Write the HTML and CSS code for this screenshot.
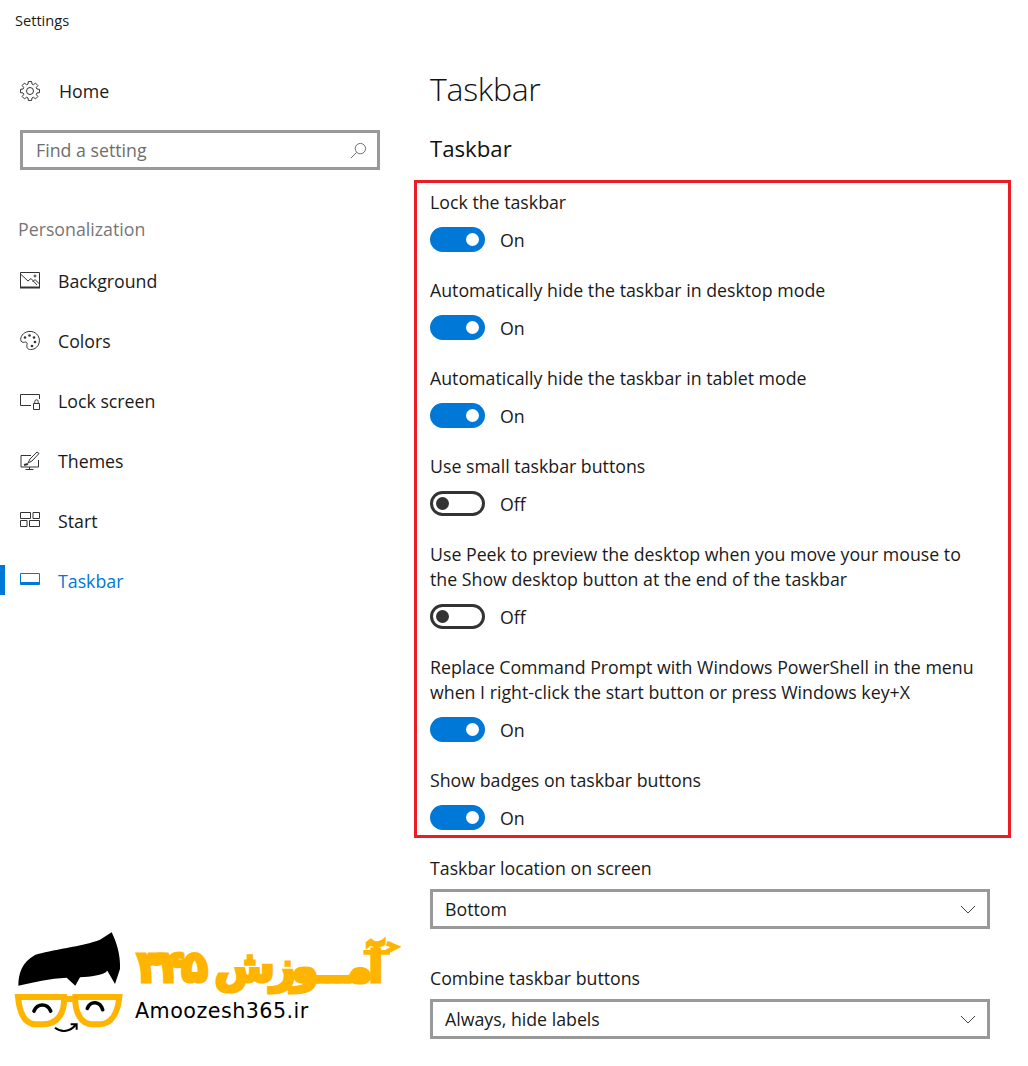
FILE: index.html
```html
<!DOCTYPE html>
<html lang="en">
<head>
    <meta charset="UTF-8">
    <title>Settings</title>
    <link rel="stylesheet" href="styles.css">
</head>
<body>
    <div class="titlebar">Settings</div>

    <div class="app">
        <div class="sidebar">
            <div class="home">
                <svg class="icon" viewBox="0 0 20 20"><path d="M16.92 8.02L19.45 8.33V11.67L16.92 11.98L16.3 13.49L17.86 15.51L15.51 17.86L13.49 16.3L11.98 16.92L11.67 19.45H8.33L8.02 16.92L6.51 16.3L4.49 17.86L2.14 15.51L3.7 13.49L3.08 11.98L.55 11.67V8.33L3.08 8.02L3.7 6.51L2.14 4.49L4.49 2.14L6.51 3.7L8.02 3.08L8.33 .55H11.67L11.98 3.08L13.49 3.7L15.51 2.14L17.86 4.49L16.3 6.51Z"/><circle cx="10" cy="10" r="3.5"/></svg>
                <span>Home</span>
            </div>

            <div class="search">
                <span>Find a setting</span>
                <svg class="search-icon" viewBox="0 0 18 18"><circle cx="11" cy="7" r="5.5"/><path d="M7 11L1 17"/></svg>
            </div>

            <div class="section-label">Personalization</div>

            <ul class="nav">
                <li>
                    <svg class="icon" viewBox="0 0 20 20"><path d="M.5 2.5H19.5V17.5H.5Z"/><path d="M.5 4L8 11L11 8.5L17 15"/><path d="M12.5 12L15 9.5L19.5 14"/><circle cx="15" cy="6" r="1"/><path class="heavy" d="M0 17.5H20"/></svg>
                    <span>Background</span>
                </li>
                <li>
                    <svg class="icon" viewBox="0 0 20 20"><path d="M10 1.4C4.8 1.4 .7 5.1 .7 9.5C.7 12.1 2.8 12.7 4.5 12.2C6.4 11.7 7.6 12.7 7 14.5C6.4 16.5 7 19.6 10.5 19.6C15.6 19.6 19.4 15.5 19.4 10.5C19.4 5.4 15.2 1.4 10 1.4Z"/><circle class="dot" cx="5" cy="7.5" r="1.3"/><circle class="dot" cx="9.5" cy="5.5" r="1.3"/><circle class="dot" cx="14" cy="7.5" r="1.3"/><circle class="dot" cx="15" cy="12" r="1.3"/><circle class="dot" cx="12" cy="16" r="1.3"/></svg>
                    <span>Colors</span>
                </li>
                <li>
                    <svg class="icon" viewBox="0 0 20 20"><path d="M11 15.5H.5V4.5H19.5V9"/><path d="M13.5 13.5H19.5V19.5H13.5Z"/><path d="M14.8 13.5V11.5A1.7 1.7 0 0 1 18.2 11.5V13.5"/></svg>
                    <span>Lock screen</span>
                </li>
                <li>
                    <svg class="icon" viewBox="0 0 20 20"><path d="M11 5.5H1V17H18.5V10"/><path d="M9.5 17V19.5M5.5 19.5H13.5"/><path d="M8 13L10 9L17 2L19 3.5L12 11Z"/><path class="heavy" d="M4 15L8 14"/></svg>
                    <span>Themes</span>
                </li>
                <li>
                    <svg class="icon" viewBox="0 0 20 20"><path d="M.5 2.5H10.5V8.5H.5Z"/><path d="M13 2.5H19.5V8.5H13Z"/><path d="M.5 10.5H7V16.5H.5Z"/><path d="M9.5 10.5H19.5V16.5H9.5Z"/></svg>
                    <span>Start</span>
                </li>
                <li class="active">
                    <svg class="icon" viewBox="0 0 20 20"><path d="M.5 3.5H19.5V14.5H.5Z"/><path class="heavy" d="M0 13H20"/></svg>
                    <span>Taskbar</span>
                </li>
            </ul>

            <svg class="logo" viewBox="0 0 1230 390">
                <path class="logo-hair" d="M55 200C55 165 65 130 105 108C150 92 250 82 300 62L335 40C350 70 362 110 360 150L345 195L322 155C310 170 270 172 240 175L226 200L200 176C150 178 100 190 55 200Z"/>
                <path class="logo-frame" d="M54 234H192C194 275 178 316 128 316H108C72 316 58 275 54 234Z"/>
                <path class="logo-frame" d="M226 234H358C354 275 338 316 298 316H278C240 316 224 275 226 234Z"/>
                <path class="logo-frame" d="M192 240H226"/>
                <path class="logo-face" d="M102 276C112 252 142 252 152 276"/>
                <path class="logo-face" d="M262 268C272 244 300 246 308 272"/>
                <path class="logo-smile" d="M165 326C185 342 212 338 228 316M212 316H230V332"/>
                <text class="logo-fa" x="1150" y="190" direction="rtl" text-anchor="start" textLength="740">آمـــوزش ۳۴۵</text>
                <path class="logo-arrow" d="M1090 100H1170M1160 72L1188 84L1160 98"/>
                <text class="logo-en" x="405" y="298" textLength="520">Amoozesh365.ir</text>
            </svg>
        </div>

        <div class="content">
            <h1>Taskbar</h1>
            <h2>Taskbar</h2>

            <div class="highlight">
                <div class="setting">
                    <p>Lock the taskbar</p>
                    <div class="switch-row"><span class="switch on"></span><span>On</span></div>
                </div>
                <div class="setting">
                    <p>Automatically hide the taskbar in desktop mode</p>
                    <div class="switch-row"><span class="switch on"></span><span>On</span></div>
                </div>
                <div class="setting">
                    <p>Automatically hide the taskbar in tablet mode</p>
                    <div class="switch-row"><span class="switch on"></span><span>On</span></div>
                </div>
                <div class="setting">
                    <p>Use small taskbar buttons</p>
                    <div class="switch-row"><span class="switch"></span><span>Off</span></div>
                </div>
                <div class="setting">
                    <p>Use Peek to preview the desktop when you move your mouse to<br>the Show desktop button at the end of the taskbar</p>
                    <div class="switch-row"><span class="switch"></span><span>Off</span></div>
                </div>
                <div class="setting">
                    <p>Replace Command Prompt with Windows PowerShell in the menu<br>when I right-click the start button or press Windows key+X</p>
                    <div class="switch-row"><span class="switch on"></span><span>On</span></div>
                </div>
                <div class="setting">
                    <p>Show badges on taskbar buttons</p>
                    <div class="switch-row"><span class="switch on"></span><span>On</span></div>
                </div>
            </div>

            <div class="field">
                <p>Taskbar location on screen</p>
                <div class="select">
                    <span>Bottom</span>
                    <svg class="chevron" viewBox="0 0 16 9"><path d="M1 1L8 8L15 1"/></svg>
                </div>
            </div>
            <div class="field">
                <p>Combine taskbar buttons</p>
                <div class="select">
                    <span>Always, hide labels</span>
                    <svg class="chevron" viewBox="0 0 16 9"><path d="M1 1L8 8L15 1"/></svg>
                </div>
            </div>
        </div>
    </div>
</body>
</html>
```

FILE: styles.css
```css
* {
    margin: 0;
    padding: 0;
    box-sizing: border-box;
}

body {
    font-family: "Open Sans", sans-serif;
    font-size: 17.75px;
    line-height: 25px;
    color: #1a1a1a;
    background: #fff;
}

.titlebar {
    height: 42px;
    padding-left: 15px;
    font-size: 14.6px;
    line-height: 40px;
}

.app {
    display: flex;
}

.sidebar {
    width: 414px;
    flex-shrink: 0;
}

.icon {
    width: 20px;
    height: 20px;
    flex-shrink: 0;
    fill: none;
    stroke: #333;
    stroke-width: 1;
}

.icon .heavy {
    stroke-width: 2;
}

.icon .dot {
    fill: #333;
    stroke: none;
}

.home {
    display: flex;
    align-items: center;
    gap: 19px;
    height: 40px;
    margin-top: 29px;
    padding-left: 20px;
}

.search {
    display: flex;
    justify-content: space-between;
    align-items: center;
    width: 360px;
    height: 40px;
    margin: 19px 0 0 20px;
    padding: 0 10px 0 13px;
    border: 3px solid #999;
    color: #6e6e6e;
}

.search-icon {
    width: 17px;
    height: 17px;
    fill: none;
    stroke: #666;
    stroke-width: 1;
}

.section-label {
    margin-top: 47px;
    padding-left: 18px;
    color: #767676;
}

.nav {
    list-style: none;
    margin-top: 8px;
}

.nav li {
    display: flex;
    align-items: center;
    gap: 18px;
    height: 60px;
    padding-left: 20px;
}

.nav li span {
    padding-top: 2px;
}

.nav li.active {
    color: #0078d7;
    position: relative;
}

.nav li.active::before {
    content: '';
    position: absolute;
    left: 0;
    top: 15px;
    width: 5px;
    height: 30px;
    background: #0078d7;
}

.nav li.active .icon {
    stroke: #0078d7;
}

.logo {
    display: block;
    width: 410px;
    height: 130px;
    margin-top: 309px;
}

.logo-hair {
    fill: #000;
}

.logo-frame {
    fill: #fff;
    stroke: #ffb400;
    stroke-width: 18;
}

.logo-face {
    fill: none;
    stroke: #000;
    stroke-width: 11;
    stroke-linecap: round;
}

.logo-smile {
    fill: none;
    stroke: #000;
    stroke-width: 6;
}

.logo-fa {
    font-family: "DejaVu Sans", sans-serif;
    font-size: 132px;
    font-weight: bold;
    fill: #ffb400;
    stroke: #ffb400;
    stroke-width: 9;
}

.logo-arrow {
    fill: none;
    stroke: #ffb400;
    stroke-width: 14;
}

.logo-en {
    font-family: "DejaVu Sans", sans-serif;
    font-size: 62px;
    fill: #000;
}

.content {
    flex: 1;
    padding-right: 17px;
}

h1 {
    height: 46px;
    margin-top: 25px;
    padding-left: 16px;
    font-size: 32px;
    font-weight: 300;
    letter-spacing: -0.3px;
    line-height: 44px;
    color: #111;
}

h2 {
    height: 32px;
    margin-top: 20px;
    padding-left: 16px;
    font-size: 22.2px;
    font-weight: 400;
    line-height: 32px;
    color: #111;
}

.highlight {
    display: flex;
    flex-direction: column;
    gap: 26px;
    margin-top: 15px;
    padding: 7px 13px 5px;
    border: 3px solid #ed1c24;
}

.switch-row {
    display: flex;
    align-items: center;
    gap: 15px;
    height: 25px;
    margin-top: 12px;
}

.switch-row span:last-child {
    padding-top: 2px;
}

.switch {
    position: relative;
    width: 55px;
    height: 25px;
    border: 3px solid #333;
    border-radius: 13px;
}

.switch::after {
    content: '';
    position: absolute;
    left: 3px;
    top: 3px;
    width: 13px;
    height: 13px;
    border-radius: 50%;
    background: #333;
}

.switch.on {
    background: #0078d7;
    border-color: #0078d7;
}

.switch.on::after {
    left: 33px;
    background: #fff;
}

.field {
    margin-top: 18px;
    padding-left: 16px;
}

.field + .field {
    margin-top: 37px;
}

.select {
    display: flex;
    justify-content: space-between;
    align-items: center;
    width: 560px;
    height: 40px;
    margin-top: 8px;
    padding: 0 11px 0 12px;
    border: 3px solid #999;
}

.chevron {
    width: 16px;
    height: 9px;
    fill: none;
    stroke: #444;
    stroke-width: 1;
}
```
